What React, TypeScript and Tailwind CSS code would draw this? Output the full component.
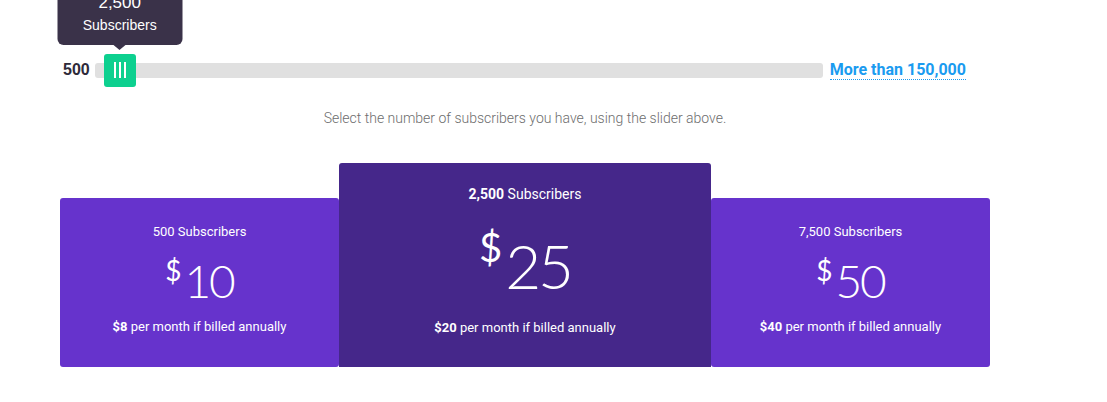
import React from 'react';

const plans = [
  { subs: '500', price: '10', annual: '$8', featured: false },
  { subs: '2,500', price: '25', annual: '$20', featured: true },
  { subs: '7,500', price: '50', annual: '$40', featured: false },
];

function PlanCard({ plan }: { plan: (typeof plans)[number] }) {
  if (plan.featured) {
    return (
      <div className="w-[372px] h-[204px] bg-[#45278a] rounded-t-[3px] flex flex-col items-center text-white pt-[23px]">
        <p className="text-[14px] leading-[16px] font-['Roboto',sans-serif]">
          <span className="font-bold">{plan.subs}</span> Subscribers
        </p>
        <div className="flex items-start mt-[20px] font-['Lato',sans-serif]">
          <span className="text-[40px] leading-[40px] mt-[5px] mr-[3px]">$</span>
          <span className="text-[62px] leading-[72px] mt-[7px] font-light tracking-[-3px]">{plan.price}</span>
        </div>
        <p className="mt-[19px] text-[13px] leading-[16px] font-['Roboto',sans-serif]">
          <span className="font-bold">{plan.annual}</span> per month if billed annually
        </p>
      </div>
    );
  }
  return (
    <div className="w-[279px] h-[169px] bg-[#6633cc] rounded-[3px] flex flex-col items-center text-white pt-[26px]">
      <p className="text-[13px] leading-[16px] font-['Roboto',sans-serif]">{plan.subs} Subscribers</p>
      <div className="flex items-start mt-[13px] font-['Lato',sans-serif]">
        <span className="text-[28px] leading-[30px] mt-[2px] mr-[3px]">$</span>
        <span className="text-[46px] leading-[52px] mt-[2px] font-light tracking-[-2px]">{plan.price}</span>
      </div>
      <p className="mt-[12px] text-[13px] leading-[16px] font-['Roboto',sans-serif]">
        <span className="font-bold">{plan.annual}</span> per month if billed annually
      </p>
    </div>
  );
}

export default function App() {
  return (
    <div className="w-[1107px] h-[402px] bg-white overflow-hidden">
      <div className="w-[930px] ml-[60px]">
        {/* Slider */}
        <div className="flex items-center h-[32px] mt-[54px]">
          <span className="ml-[3px] text-[16px] font-bold text-[#2e2b3a] font-['Liberation_Sans',sans-serif]">500</span>
          <div className="relative ml-[5px] w-[728px] h-[15px] bg-[#e0e0e0] rounded-[3px]">
            <div className="absolute left-[9px] top-[-9px] w-[32px] h-[33px] bg-[#0dd08f] rounded-[3px] flex items-center justify-center gap-[3px]">
              <span className="w-[2px] h-[16px] bg-white" />
              <span className="w-[2px] h-[16px] bg-white" />
              <span className="w-[2px] h-[16px] bg-white" />
              {/* Tooltip */}
              <div className="absolute bottom-[42px] left-1/2 -translate-x-1/2 w-[125px] bg-[#3a3249] rounded-[6px] text-white text-center font-['Liberation_Sans',sans-serif] pb-[11px]">
                <div className="text-[17px] leading-[22px]">2,500</div>
                <div className="text-[14px] leading-[18px] mt-[2px]">Subscribers</div>
                <span className="absolute left-1/2 -translate-x-1/2 top-full w-0 h-0 border-x-[6px] border-x-transparent border-t-[5px] border-t-[#3a3249]" />
              </div>
            </div>
          </div>
          <a className="ml-[7px] text-[16px] font-bold text-[#1a9bf0] font-['Roboto',sans-serif] leading-[19px] border-b border-dotted border-[#1a9bf0]">
            More than 150,000
          </a>
        </div>

        <p className="mt-[23px] text-center text-[14px] leading-[18px] text-[#6d6d6d] font-['Roboto',sans-serif] font-light">
          Select the number of subscribers you have, using the slider above.
        </p>

        {/* Plans */}
        <div className="flex items-end mt-[36px]">
          {plans.map((p) => (
            <PlanCard key={p.subs} plan={p} />
          ))}
        </div>
      </div>
    </div>
  );
}
